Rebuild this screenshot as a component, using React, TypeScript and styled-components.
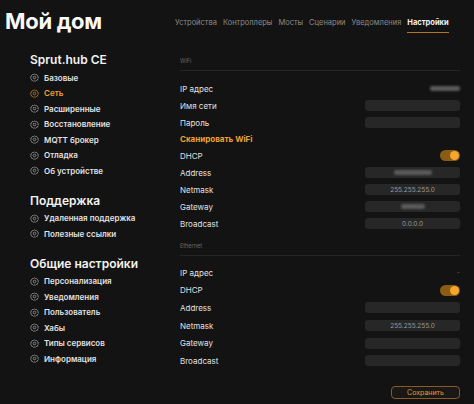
import * as React from 'react';
import styled, { createGlobalStyle } from 'styled-components';

const GlobalStyle = createGlobalStyle`
  html, body {
    margin: 0;
    padding: 0;
    background: #131313;
  }
  body {
    font-family: Inter, "Noto Sans", Roboto, sans-serif;
    color: #e6e6e6;
  }
`;

const Page = styled.div`
  width: 474px;
  height: 404px;
  overflow: hidden;
  display: grid;
  grid-template-columns: 172px minmax(0, 1fr);
  grid-template-rows: 42px 1fr;
  padding-right: 14px;
  box-sizing: border-box;
`;

const Title = styled.h1`
  margin: 0;
  padding-left: 5px;
  font-size: 22px;
  font-weight: 700;
  color: #fafafa;
  letter-spacing: -0.3px;
  display: flex;
  align-items: center;
  height: 42px;
`;

const Nav = styled.nav`
  display: flex;
  align-items: flex-end;
  gap: 6px;
  padding-left: 3px;
  height: 33px;
`;

const Tab = styled.a<{ $active?: boolean }>`
  font-size: 7.5px;
  line-height: 10px;
  padding-bottom: 4px;
  color: ${(p) => (p.$active ? '#f4f4f4' : '#8a8a8a')};
  font-weight: ${(p) => (p.$active ? 700 : 400)};
  border-bottom: 1px solid ${(p) => (p.$active ? '#b8741c' : 'transparent')};
  text-decoration: none;
  white-space: nowrap;
`;

const Sidebar = styled.aside`
  padding: 11px 0 0 30px;
`;

const Heading = styled.h2<{ $first?: boolean }>`
  margin: ${(p) => (p.$first ? '0' : '15px')} 0 3px;
  font-size: 12px;
  line-height: 14px;
  font-weight: 600;
  color: #f2f2f2;
`;

const MenuItem = styled.div<{ $active?: boolean }>`
  display: flex;
  align-items: center;
  gap: 5px;
  height: 15.5px;
  font-size: 8px;
  font-weight: 600;
  color: ${(p) => (p.$active ? '#f0a030' : '#e2e2e2')};

  svg {
    color: ${(p) => (p.$active ? '#c98a2c' : '#a0a0a0')};
    flex: none;
  }
`;

const Content = styled.main`
  padding: 15px 0 0 8px;
  min-width: 0;
`;

const SectionLabel = styled.div<{ $spaced?: boolean }>`
  font-size: 5.5px;
  line-height: 8px;
  color: #6a6a6a;
  padding-bottom: 5px;
  margin-top: ${(p) => (p.$spaced ? '10px' : '0')};
  border-bottom: 1px solid #262626;
`;

const Rows = styled.div<{ $gap: number }>`
  padding-top: ${(p) => p.$gap}px;
`;

const Row = styled.div<{ $h: number }>`
  display: flex;
  align-items: center;
  justify-content: space-between;
  height: ${(p) => p.$h}px;
`;

const Label = styled.span<{ $accent?: boolean }>`
  font-size: 8px;
  color: ${(p) => (p.$accent ? '#f0a030' : '#e0e0e0')};
  font-weight: ${(p) => (p.$accent ? 700 : 400)};
`;

const Field = styled.div`
  width: 95px;
  height: 11px;
  border-radius: 3px;
  background: #272727;
  display: flex;
  align-items: center;
  justify-content: center;
  font-size: 6.5px;
  color: #9a9a9a;
`;

const Blurred = styled.span<{ $w: number }>`
  display: inline-block;
  width: ${(p) => p.$w}px;
  height: 5px;
  border-radius: 2px;
  background: #5a5a5a;
  filter: blur(1.2px);
`;

const PlainValue = styled.div`
  width: 35px;
  display: flex;
  justify-content: flex-end;
  font-size: 6.5px;
  color: #666;
`;

const Toggle = styled.div`
  width: 20px;
  height: 11px;
  border-radius: 6px;
  background: #8a5c14;
  display: flex;
  align-items: center;
  justify-content: flex-end;
  padding: 0 1px;
  box-sizing: border-box;

  &::after {
    content: '';
    width: 9px;
    height: 9px;
    border-radius: 50%;
    background: #f6a62a;
  }
`;

const Footer = styled.div`
  display: flex;
  justify-content: flex-end;
  margin-top: 16px;
`;

const SaveButton = styled.button`
  width: 69px;
  height: 13px;
  border-radius: 4px;
  border: 1px solid #8a5a22;
  background: #1a1815;
  color: #e39a3a;
  font-family: inherit;
  font-size: 7px;
  padding: 0;
`;

const Cog = () => (
  <svg width="9" height="9" viewBox="0 0 24 24" fill="none" stroke="currentColor" strokeWidth="2">
    <path d="M12 2.5l2.6 1.6 3 -.2 1.4 2.7 2.6 1.5 -.2 3 1.1 2.9 -2.1 2.1 -.6 3 -2.9.8 -2.1 2.1 -2.8-1 -2.8 1 -2.1-2.1 -2.9-.8 -.6-3 -2.1-2.1 1.1-2.9 -.2-3 2.6-1.5 1.4-2.7 3 .2z" strokeLinejoin="round" />
    <circle cx="12" cy="12" r="3.5" />
  </svg>
);

const tabs = ['Устройства', 'Контроллеры', 'Мосты', 'Сценарии', 'Уведомления', 'Настройки'];

const groups = [
  { title: 'Sprut.hub CE', items: ['Базовые', 'Сеть', 'Расширенные', 'Восстановление', 'MQTT брокер', 'Отладка', 'Об устройстве'] },
  { title: 'Поддержка', items: ['Удаленная поддержка', 'Полезные ссылки'] },
  { title: 'Общие настройки', items: ['Персонализация', 'Уведомления', 'Пользователь', 'Хабы', 'Типы сервисов', 'Информация'] },
];

const App = () => {
  return (
    <>
      <GlobalStyle />
      <Page>
        <Title>Мой дом</Title>
        <Nav>
          {tabs.map((t) => (
            <Tab key={t} $active={t === 'Настройки'}>
              {t}
            </Tab>
          ))}
        </Nav>

        <Sidebar>
          {groups.map((g, i) => (
            <div key={g.title}>
              <Heading $first={i === 0}>{g.title}</Heading>
              {g.items.map((it) => (
                <MenuItem key={it} $active={it === 'Сеть'}>
                  <Cog />
                  {it}
                </MenuItem>
              ))}
            </div>
          ))}
        </Sidebar>

        <Content>
          <SectionLabel>WiFi</SectionLabel>
          <Rows $gap={9}>
            <Row $h={17}>
              <Label>IP адрес</Label>
              <PlainValue>
                <Blurred $w={30} />
              </PlainValue>
            </Row>
            <Row $h={17}>
              <Label>Имя сети</Label>
              <Field />
            </Row>
            <Row $h={17}>
              <Label>Пароль</Label>
              <Field />
            </Row>
            <Row $h={16}>
              <Label $accent>Сканировать WiFi</Label>
            </Row>
            <Row $h={17}>
              <Label>DHCP</Label>
              <Toggle />
            </Row>
            <Row $h={17}>
              <Label>Address</Label>
              <Field>
                <Blurred $w={38} />
              </Field>
            </Row>
            <Row $h={17}>
              <Label>Netmask</Label>
              <Field>255.255.255.0</Field>
            </Row>
            <Row $h={17}>
              <Label>Gateway</Label>
              <Field>
                <Blurred $w={24} />
              </Field>
            </Row>
            <Row $h={17}>
              <Label>Broadcast</Label>
              <Field>0.0.0.0</Field>
            </Row>
          </Rows>

          <SectionLabel $spaced>Ethernet</SectionLabel>
          <Rows $gap={8}>
            <Row $h={17.6}>
              <Label>IP адрес</Label>
              <PlainValue>-</PlainValue>
            </Row>
            <Row $h={17.6}>
              <Label>DHCP</Label>
              <Toggle />
            </Row>
            <Row $h={17.6}>
              <Label>Address</Label>
              <Field />
            </Row>
            <Row $h={17.6}>
              <Label>Netmask</Label>
              <Field>255.255.255.0</Field>
            </Row>
            <Row $h={17.6}>
              <Label>Gateway</Label>
              <Field />
            </Row>
            <Row $h={17.6}>
              <Label>Broadcast</Label>
              <Field />
            </Row>
          </Rows>

          <Footer>
            <SaveButton>Сохранить</SaveButton>
          </Footer>
        </Content>
      </Page>
    </>
  );
};

export default App;
